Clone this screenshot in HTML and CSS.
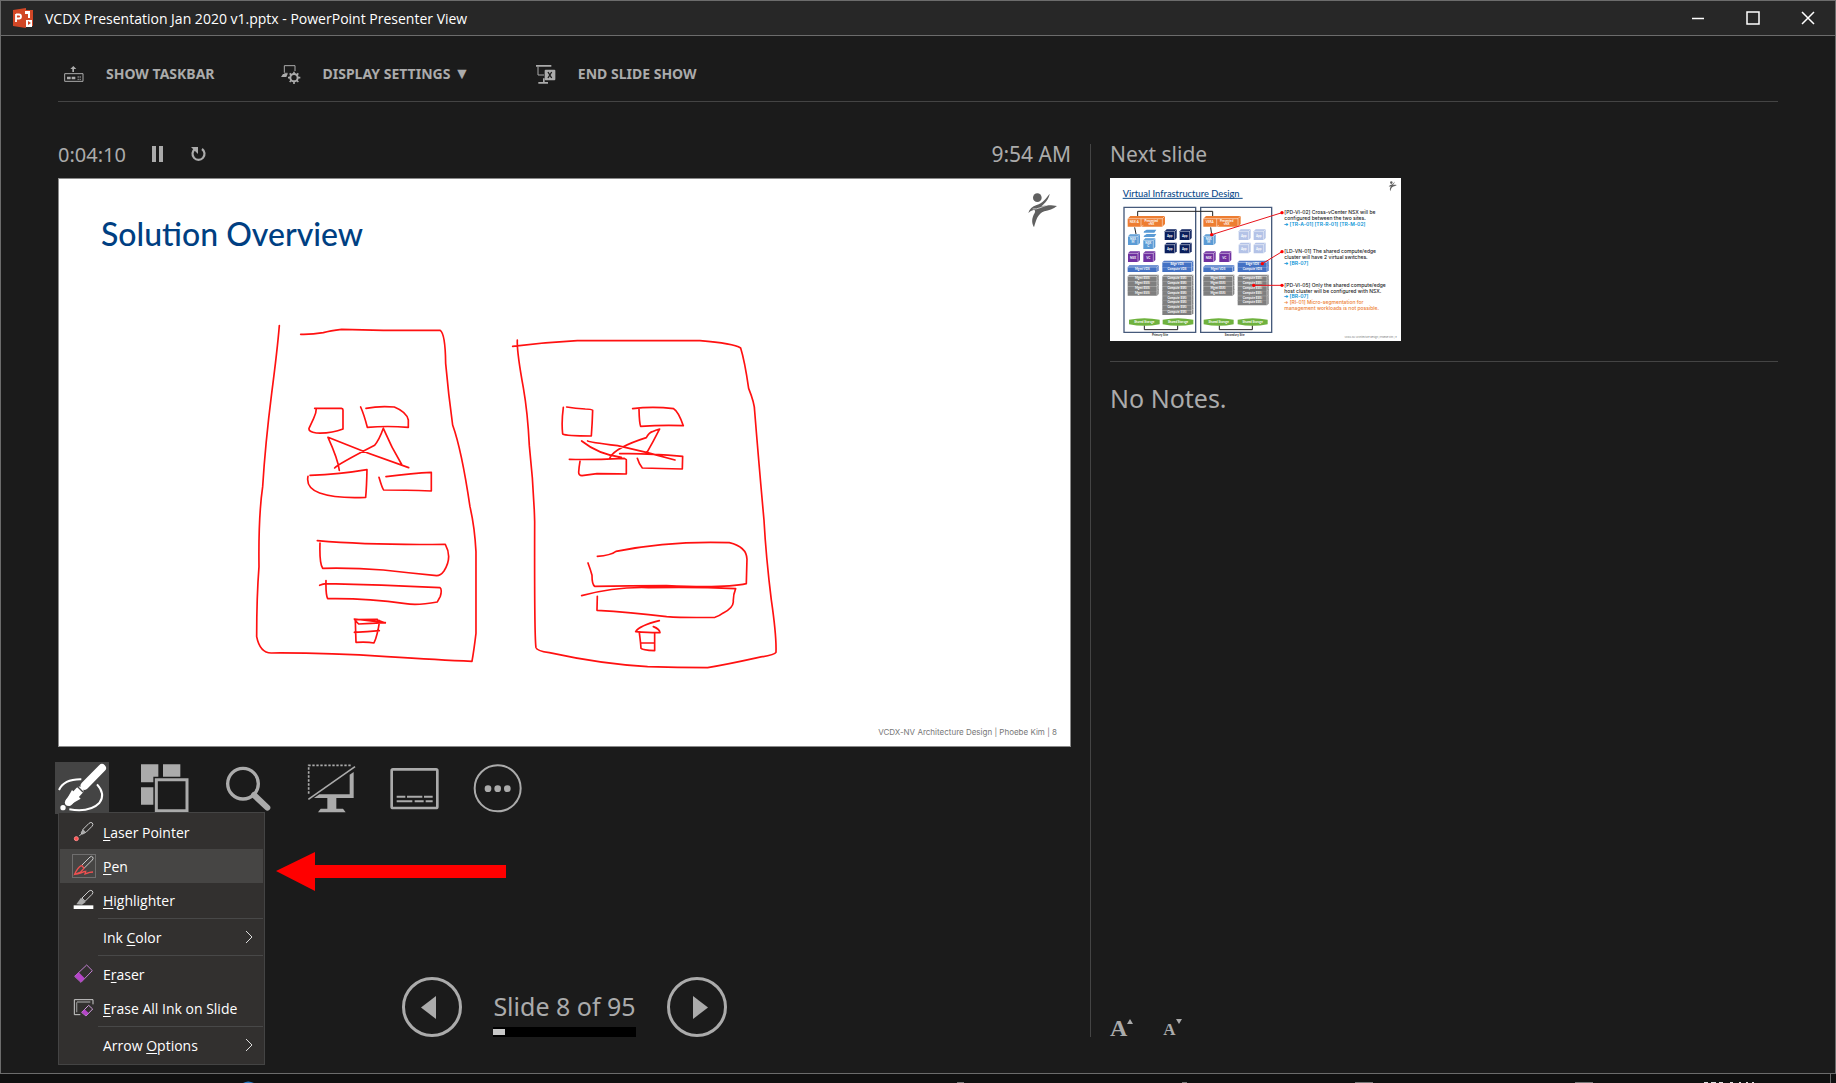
FILE: index.html
```html
<!DOCTYPE html>
<html lang="en">
<head>
<meta charset="utf-8">
<title>VCDX Presentation Jan 2020 v1.pptx - PowerPoint Presenter View</title>
<link rel="stylesheet" href="styles.css">
</head>
<body>
<div class="window">
  <header class="titlebar">
    <svg class="app-icon" viewBox="0 0 20 20" aria-hidden="true"><path d="M0 2 13 0v20L0 18z" fill="#d24726"/><path d="M13 2h7v16h-7z" fill="#d24726"/><path d="M3 6v8M3 6.500h3a1.700 1.700 0 0 1 0 4H3" fill="none" stroke="#fff" stroke-width="1.800"/><path d="M12 3h5v7h-2V6h-3zM13 12h6v7h-6z" fill="#fff"/><path d="M15 13v4l3-2z" fill="#d24726"/></svg>
    <h1 class="window-title">VCDX Presentation Jan 2020 v1.pptx - PowerPoint Presenter View</h1>
    <div class="window-controls">
      <button type="button" aria-label="Minimize"><svg viewBox="0 0 14 14"><path d="M1 7.500h12"/></svg></button>
      <button type="button" aria-label="Maximize"><svg viewBox="0 0 14 14"><path d="M1 1h12v12H1z"/></svg></button>
      <button type="button" aria-label="Close"><svg viewBox="0 0 14 14"><path d="M1 1l12 12M13 1 1 13"/></svg></button>
    </div>
  </header>

  <nav class="toolbar" aria-label="Presentation">
    <button type="button"><svg viewBox="35 39 72 72"><path d="M43 74h55v23H43z" fill="none" stroke="#ababab" stroke-width="3"/><path d="M50 83h11v8H50zM64 83h11v8H64zM82 82h3v4h-3zM88 82h3v4h-3zM82 89h3v4h-3zM88 89h3v4h-3zM69 51l9 9h-7v9h-5v-9h-6z"/></svg>SHOW TASKBAR</button>
    <button type="button"><svg viewBox="693 39 72 72"><path d="M709 71V50h32v16M709 73h10" fill="none" stroke="#ababab" stroke-width="3"/><path d="M705 75h14l-4 9h-16z"/><circle cx="738" cy="86" r="11" fill="none" stroke="#ababab" stroke-width="6"/><path d="M738 68v8M738 96v9M720 86h8M748 86h9M725 73l6 6M745 93l6 6M725 99l6-6M745 79l6-6" stroke="#ababab" stroke-width="5"/></svg><span>DISPLAY SETTINGS <span class="drop">▼</span></span></button>
    <button type="button"><svg viewBox="1448 39 72 72"><path d="M1454 48h46v5h-46zM1475 88h5v11h10v5h-29v-5h14z"/><path d="M1460 53v25h18" fill="none" stroke="#ababab" stroke-width="3"/><rect x="1480" y="62" width="32" height="32" rx="3"/><path d="M1490 69l11 18M1501 69l-11 18" stroke="#1b1b1b" stroke-width="4"/></svg>END SLIDE SHOW</button>
  </nav>

  <main class="presenter">
    <section class="current">
      <div class="clock-row">
        <span class="elapsed">0:04:10</span>
        <button type="button" aria-label="Pause the timer"><svg viewBox="0 0 16 16"><path d="M2 0h4v16H2zM9 0h4v16H9z"/></svg></button>
        <button type="button" aria-label="Restart the timer"><svg viewBox="0 0 16 16"><path d="M12 3a6 6 0 1 1-7 0" fill="none" stroke="#ababab" stroke-width="2.200"/><path d="M1 1h7v7z"/></svg></button>
        <time class="time">9:54 AM</time>
      </div>

      <svg class="slide" viewBox="0 0 1013 569" role="img" aria-label="Current slide">
        <text class="slide-title" x="43" y="68">Solution Overview</text>
        <text class="slide-footer" x="999" y="557">VCDX-NV Architecture Design | Phoebe Kim | 8</text>
        <g class="logo" transform="translate(902 -48) scale(.3333)"><circle cx="232" cy="203" r="13"/><path d="M269 191c-3 18-14 28-25 38 16-5 34-3 47-1-11 10-25 12-38 16-20 7-24 26-31 48-8-15-7-28 2-43 3-6 1-10-3-9-6 1-11 4-16 9 3-12 12-20 25-24 18-5 28-20 39-34z"/><path class="logo-gap" d="M218 237c16 2 28-8 45-12"/></g>
        <g class="ink" transform="translate(182 132) scale(.3333)">
          <path d="M118 47Q112 120 95 250Q76 400 68 530Q55 620 57 770Q50 860 50 980Q60 1030 95 1029Q260 1028 440 1040Q600 1050 696 1054Q702 1020 708 970V725Q704 650 690 590Q665 420 638 345Q625 250 617 160Q616 70 600 61H430L305 58Q270 62 250 68Q215 74 182 73"/>
          <path d="M224 295h80q5 1 5 5v57q-35 14-80 12-24-3-22-14l14-30q8-15 8-30M362 291q10 22 20 61 60-5 123 0v-22q-5-24-42-39-45-4-85 4M298 481q-4-33-34-99 120 50 242 91M284 474q8-10 120-68 14-17 26-51 24 57 56 110M210 496q90-3 171-17-1 50-4 83-90 4-138-13-42-15-35-50M417 502q10 34 14 38 65 0 143 3v-56q-55 2-136 13M232 692q160 14 384 11 22 40-4 80-10 14-22 14-80-8-160-17-90-7-182-5-10-15-8-76M239 826q10-4 21-5 160 3 340 12 7 5 1 26l-9 17q-60 11-95 5-120-17-234-15-6-12-5-54"/>
          <path d="M343 927q35 4 93 11-45 2-80 4l-10-10 2 65q35-2 54 2 10-20 17-67M343 967q40-1 75-5M344 966h30M344 929l68-1M412 930l24 9"/>
        </g>
        <g class="ink" transform="translate(442 142) scale(.3333)">
          <path d="M38 79q100-12 194-17h368q100 8 122 22 12 38 24 121 18 45 18 68 12 150 28 327 6 110 22 240 16 110 14 157-4 7-55 16-90 20-150 30-90 0-180-3-140-8-295-42-38-5-40-15-5-30-4-378-3-110-16-228-5-100-18-174-20-110-18-143"/>
          <path d="M190 262q-6 45-2 80 10 6 86 6 3-40 4-77-4-4-22-4-30-1-56-6M398 266q60-8 123 0 14 8 29 51-66-2-128 2-4-9-5-52M245 363q50 40 119 49M263 363q2 3 90 14 90 20 172 43M330 413q15-30 109-60 8-15 18-18 10-5 22-8-20 40-40 74M359 401q80-2 189 8l-1 38q-65-2-120-3-10-12-15-29M208 418q60 2 165-3l6 4v43q-50-1-88-1l-45 6q-10 0-10-10 1-16 4-33M292 709q40-3 56-15 160-32 340-26 52 12 53 50l-2 73q-60 14-240 6-110 0-215 2-8-5-8-33-4-16-12-37M245 827q100-27 200-24 140-3 262 3-8 20-7 40-1 18-30 33-10 8-25 13-90 2-145-2-110-14-209-19l1-42"/>
          <path d="M478 902q-60 15-71 33 50 4 73 3-1-11-20-18M418 938q4 30 5 47 4 6 41 7v-52M425 969h37"/>
        </g>
      </svg>

      <div class="tools">
        <div class="tool-anchor">
          <button class="tool active" type="button" aria-label="Pen and laser pointer tools" aria-expanded="true"><svg viewBox="46 66 162 156"><path d="M187 84l-52 53M119 152l-30 33" stroke="#fff" stroke-width="24" stroke-linecap="round" fill="none"/><path d="M112 138l18 18" stroke="#444" stroke-width="4"/><path d="M97 150 76 187q-1 11 10 10l37-21z" fill="#fff"/><circle cx="70" cy="203" r="8" fill="#fff"/><path d="M58 150q15-33 67-32M172 133q27 29 7 56-28 29-90 19" stroke="#fff" stroke-width="6" fill="none"/></svg></button>
          <div class="menu" role="menu">
            <button type="button" role="menuitem"><svg viewBox="95 234 72 72"><path d="M128 262l18-18q6-5 10-1 4 5-1 10l-18 18-14 5z" class="line"/><path d="M128 262l9 9-10 7-6-6zM118 281l8-9"/><path d="M117 282l9-9" class="line"/><circle cx="108" cy="290" r="6" fill="#ff5050" stroke="#ff8a8a" stroke-width="3"/></svg><span><u>L</u>aser Pointer</span></button>
            <button class="selected" type="button" role="menuitem"><svg viewBox="95 337 72 72"><path d="M96 338h70v70H96z" fill="none" stroke="#777" stroke-width="3"/><path d="M124 371l25-25q5-4 8 0 3 5-1 9l-25 25" class="line"/><path d="M124 371l7 9-10 11-18 7q8-20 21-27M103 398q20-3 28-8l5-1-2 8 14-5 10-1" fill="none" stroke="#f05050" stroke-width="4"/></svg><span><u>P</u>en</span></button>
            <button type="button" role="menuitem"><svg viewBox="95 441 72 72"><path d="M125 471l21-21q6-4 10 0 4 5-1 10l-21 21z" class="line"/><path d="M122 470l14 13-11 8-17-1z"/><path d="M100 493h59v11h-59z" fill="#fff"/></svg><span><u>H</u>ighlighter</span></button>
            <hr>
            <button type="button" role="menuitem"><span class="no-icon"></span><span>Ink <u>C</u>olor</span><svg class="chevron" viewBox="0 0 8 12"><path d="M1 0l6 6-6 6"/></svg></button>
            <hr>
            <button type="button" role="menuitem"><svg viewBox="95 664 72 72"><path d="M139 673l17 17-34 35-19-18z" fill="none" stroke="#c080d0" stroke-width="3"/><path d="M115 695l18 18-11 12-19-18z" fill="#b545c8"/></svg><span>E<u>r</u>aser</span></button>
            <button type="button" role="menuitem"><svg viewBox="95 768 72 72"><path d="M120 824h-18v-45h56v14" class="line"/><path d="M110 786h40M109 787v30" stroke="#888" stroke-width="4"/><path d="M145 796l12 11-20 21-13-11z" fill="none" stroke="#d0a0dc" stroke-width="3"/><path d="M133 808l12 11-8 9-13-11z" fill="#b545c8"/></svg><span><u>E</u>rase All Ink on Slide</span></button>
            <hr>
            <button type="button" role="menuitem"><span class="no-icon"></span><span>Arrow <u>O</u>ptions</span><svg class="chevron" viewBox="0 0 8 12"><path d="M1 0l6 6-6 6"/></svg></button>
          </div>
          <svg class="callout" viewBox="0 0 230 39" aria-hidden="true"><path d="M0 19 39 0v13h191v13H39v13z" fill="#f00"/></svg>
        </div>
        <button class="tool" type="button" aria-label="See all slides"><svg viewBox="295 66 162 156"><path d="M304 73h52v37h-15v17h-37zM370 73h52v37h-52zM304 142h37v52h-37z"/><path d="M350 119h92v93h-92z" fill="none" stroke="#ababab" stroke-width="9"/></svg></button>
        <button class="tool" type="button" aria-label="Zoom into the slide"><svg viewBox="544 66 162 156"><circle cx="610" cy="131" r="46" fill="none" stroke="#ababab" stroke-width="10"/><path d="M643 165l40 38" stroke="#ababab" stroke-width="18" stroke-linecap="round"/></svg></button>
        <button class="tool" type="button" aria-label="Black or unblack slide show"><svg viewBox="793 66 162 156"><path d="M807 161V76h126" fill="none" stroke="#ababab" stroke-width="5" stroke-dasharray="7 5"/><path d="M806 178 946 80" stroke="#ababab" stroke-width="5"/><path d="M942 96v78H823l16-11h91v-59zM863 174h27v32h20l8 11h-83l8-11h20z"/></svg></button>
        <button class="tool" type="button" aria-label="Toggle subtitles"><svg viewBox="1042 66 162 156"><rect x="1056" y="88" width="137" height="116" rx="4" fill="none" stroke="#ababab" stroke-width="8"/><path d="M1071 170h26M1102 170h46M1153 170h26M1071 184h47M1125 184h27M1158 184h21" stroke="#ababab" stroke-width="6"/></svg></button>
        <button class="tool" type="button" aria-label="More slide show options"><svg viewBox="1291 66 162 156"><circle cx="1374" cy="145" r="69" fill="none" stroke="#ababab" stroke-width="6"/><circle cx="1345" cy="146" r="10"/><circle cx="1374" cy="146" r="10"/><circle cx="1403" cy="146" r="10"/></svg></button>
      </div>

      <div class="pager">
        <button type="button" aria-label="Previous slide"><svg viewBox="0 0 60 60"><circle cx="30" cy="30" r="28.500"/><path d="M19 30.500 34 19v23z"/></svg></button>
        <div class="position">
          <label for="progress">Slide 8 of 95</label>
          <progress id="progress" value="8" max="95"></progress>
        </div>
        <button type="button" aria-label="Next slide"><svg viewBox="0 0 60 60"><circle cx="30" cy="30" r="28.500"/><path d="M41 30.500 26 19v23z"/></svg></button>
      </div>
    </section>

    <aside class="side">
      <h2>Next slide</h2>
      <svg class="thumb" viewBox="30 27 873 489" role="img" aria-label="Next slide: Virtual Infrastructure Design">
        <defs>
          <g id="cube"><path d="M0 6 6 0h30v26l-6 6H0z"/><path d="M0 6h30v26M30 6l6-6" class="edge"/></g>
          <g id="slab"><path d="M0 5 5 0h88v15l-5 5H0z"/><path d="M0 5h88v15M88 5l5-5" class="edge"/></g>
          <g id="orange"><path d="M0 8 8 0h104v24l-8 8H0z"/><path d="M0 8h104v24M104 8l8-8M40 8v24l7-4" class="edge"/></g>
        </defs>
        <text class="next-title" x="68" y="83">Virtual Infrastructure Design</text>
        <path d="M68 88h360" stroke="#0b4a8a" stroke-width="3"/>
        <g class="logo" transform="translate(809 -18) scale(.28 .29)"><circle cx="232" cy="203" r="13"/><path d="M269 191c-3 18-14 28-25 38 16-5 34-3 47-1-11 10-25 12-38 16-20 7-24 26-31 48-8-15-7-28 2-43 3-6 1-10-3-9-6 1-11 4-16 9 3-12 12-20 25-24 18-5 28-20 39-34z"/></g>
        <path d="M72 115h215v375H72zM302 115h213v375H302z" fill="none" stroke="#465a7b" stroke-width="4"/>
        <path d="M113 142v-15h225v14M104 175l4 20M332 175l3 22M133 469v13h100v-13M358 469v13h99v-13" fill="none" stroke="#222" stroke-width="3"/>
        <g fill="#ed7d31"><use href="#orange" x="83" y="141"/><use href="#orange" x="310" y="141"/></g>
        <g fill="#5b9bd5"><use href="#cube" x="84" y="196"/><use href="#cube" x="130" y="208"/><use href="#cube" x="311" y="196"/><path d="M132 187l8-5h29l-6 9h-32zM132 200l8-5h29l-6 9h-32z"/></g>
        <g fill="#7030a0"><use href="#cube" x="84" y="247"/><use href="#cube" x="130" y="247"/><use href="#cube" x="311" y="247"/><use href="#cube" x="358" y="247"/></g>
        <g fill="#0b1f5c"><use href="#cube" x="194" y="181"/><use href="#cube" x="239" y="181"/><use href="#cube" x="194" y="221"/><use href="#cube" x="239" y="221"/></g>
        <g fill="#b4c3e7"><use href="#cube" x="416" y="181"/><use href="#cube" x="461" y="181"/><use href="#cube" x="416" y="221"/><use href="#cube" x="461" y="221"/></g>
        <g fill="#4472c4"><use href="#slab" x="83" y="289"/><use href="#slab" x="187" y="289"/><use href="#slab" x="187" y="275"/><use href="#slab" x="310" y="289"/><use href="#slab" x="413" y="289"/><use href="#slab" x="413" y="275"/></g>
        <g fill="#7f7f7f">
          <use href="#slab" x="83" y="360"/><use href="#slab" x="83" y="346"/><use href="#slab" x="83" y="331"/><use href="#slab" x="83" y="317"/>
          <use href="#slab" x="310" y="360"/><use href="#slab" x="310" y="346"/><use href="#slab" x="310" y="331"/><use href="#slab" x="310" y="317"/>
          <use href="#slab" x="187" y="418"/><use href="#slab" x="187" y="403"/><use href="#slab" x="187" y="389"/><use href="#slab" x="187" y="375"/><use href="#slab" x="187" y="360"/><use href="#slab" x="187" y="346"/><use href="#slab" x="187" y="331"/><use href="#slab" x="187" y="317"/>
          <use href="#slab" x="413" y="389"/><use href="#slab" x="413" y="375"/><use href="#slab" x="413" y="360"/><use href="#slab" x="413" y="346"/><use href="#slab" x="413" y="331"/><use href="#slab" x="413" y="317"/>
        </g>
        <path d="M87 452q46-9 92 0v14q-46 9-92 0zM188 452q46-9 92 0v14q-46 9-92 0zM311 452q45-9 90 0v14q-45 9-90 0zM413 452q45-9 90 0v14q-45 9-90 0z" fill="#6fb23e"/>
        <g class="tag">
          <text x="103" y="163">NSX-A</text><text x="154" y="158">Presented</text><text x="154" y="168">vNX</text><text x="329" y="163">VSRA</text><text x="380" y="158">Presented</text><text x="380" y="168">vNX</text>
          <text x="99" y="213">NSX</text><text x="99" y="221">M</text><text x="145" y="224">NSX</text><text x="145" y="233">C</text><text x="326" y="213">NSX</text><text x="326" y="221">M</text>
          <text x="99" y="270">NSX</text><text x="145" y="270">VC</text><text x="326" y="270">NSX</text><text x="373" y="270">VC</text>
          <text x="209" y="204">App</text><text x="254" y="204">App</text><text x="209" y="244">App</text><text x="254" y="244">App</text><text x="431" y="204">App</text><text x="476" y="204">App</text><text x="431" y="244">App</text><text x="476" y="244">App</text>
          <text x="127" y="302">Mgmt VDS</text><text x="231" y="288">Edge VDS</text><text x="231" y="302">Compute VDS</text><text x="354" y="302">Mgmt VDS</text><text x="457" y="288">Edge VDS</text><text x="457" y="302">Compute VDS</text>
          <text x="127" y="331">Mgmt ESXi</text><text x="127" y="345">Mgmt ESXi</text><text x="127" y="360">Mgmt ESXi</text><text x="127" y="374">Mgmt ESXi</text>
          <text x="354" y="331">Mgmt ESXi</text><text x="354" y="345">Mgmt ESXi</text><text x="354" y="360">Mgmt ESXi</text><text x="354" y="374">Mgmt ESXi</text>
          <text x="231" y="331">Compute ESXi</text><text x="231" y="345">Compute ESXi</text><text x="231" y="360">Compute ESXi</text><text x="231" y="374">Compute ESXi</text><text x="231" y="389">Compute ESXi</text><text x="231" y="403">Compute ESXi</text><text x="231" y="417">Compute ESXi</text><text x="231" y="432">Compute ESXi</text>
          <text x="457" y="331">Compute ESXi</text><text x="457" y="345">Compute ESXi</text><text x="457" y="360">Compute ESXi</text><text x="457" y="374">Compute ESXi</text><text x="457" y="389">Compute ESXi</text><text x="457" y="403">Compute ESXi</text>
          <text x="133" y="462">Shared Storage</text><text x="234" y="462">Shared Storage</text><text x="356" y="462">Shared Storage</text><text x="458" y="462">Shared Storage</text>
          <text class="dark" x="180" y="500">Primary Site</text><text class="dark" x="404" y="500">Secondary Site</text>
        </g>
        <path d="M335 197 546 131M487 284l59-36M461 349h85" stroke="#e8141c" stroke-width="3"/>
        <g fill="#f00"><circle cx="335" cy="197" r="5"/><circle cx="546" cy="131" r="5"/><circle cx="487" cy="284" r="5"/><circle cx="546" cy="248" r="5"/><circle cx="461" cy="349" r="5"/><circle cx="546" cy="349" r="5"/></g>
        <g class="callouts">
          <text x="553" y="136">[PD-VI-02] Cross-vCenter NSX will be</text><text x="553" y="153">configured between the two sites.</text><text class="blue" x="553" y="170">➔ [TR-A-01] [TR-R-01] [TR-M-02]</text>
          <text x="553" y="253">[LD-VN-01] The shared compute/edge</text><text x="553" y="270">cluster will have 2 virtual switches.</text><text class="blue" x="553" y="287">➔ [BR-07]</text>
          <text x="553" y="354">[PD-VI-05] Only the shared compute/edge</text><text x="553" y="371">host cluster will be configured with NSX.</text><text class="blue" x="553" y="388">➔ [BR-07]</text><text class="rust" x="553" y="405">➔ [RI-01] Micro-segmentation for</text><text class="rust" x="553" y="422">management workloads is not possible.</text>
        </g>
        <text class="next-footer" x="890" y="506">VCDX-NV Architecture Design | Phoebe Kim | 9</text>
      </svg>
      <div class="notes"><p>No Notes.</p></div>
      <div class="text-size">
        <button type="button" aria-label="Make the text larger"><span class="letter large">A</span><svg viewBox="0 0 6 5"><path d="M0 5 3 0l3 5z"/></svg></button>
        <button type="button" aria-label="Make the text smaller"><span class="letter">A</span><svg viewBox="0 0 6 5"><path d="M0 0h6L3 5z"/></svg></button>
      </div>
    </aside>
  </main>
</div>
<footer class="taskbar">
  <svg viewBox="0 0 1836 9" aria-hidden="true"><path d="M243 9q5-3 11 0z" fill="#2b7dc4"/><path d="M957 8h7v1h-7zM1182 8h5v1h-5zM1355 8h18v1h-18zM1575 8h18v1h-18z" fill="#777"/><path d="M1704 8h4v1h-4zM1711 8h5v1h-5zM1719 8h4v1h-4zM1730 8h3v1h-3zM1739 8h2v1h-2zM1746 8h2v1h-2zM1752 8h2v1h-2z" fill="#ddd"/><path d="M1830 0h1v9h-1z" fill="#666"/></svg>
</footer>
</body>
</html>
```
FILE: styles.css
```css
* { box-sizing: border-box; }

body {
  margin: 0;
  min-height: 100vh;
  display: flex;
  flex-direction: column;
  background: #101010;
  color: #ababab;
  font-family: "Noto Sans", "Open Sans", sans-serif;
}

h1, h2, p { margin: 0; font-weight: 400; }

button {
  margin: 0;
  padding: 0;
  border: 0;
  background: none;
  color: inherit;
  font: inherit;
}

svg { display: block; fill: #ababab; }

.window {
  flex: 1;
  display: flex;
  flex-direction: column;
  border: 1px solid #6c6c6c;
  background: #1b1b1b;
}

/* Title bar */
.titlebar {
  display: flex;
  align-items: center;
  height: 35px;
  padding-left: 12px;
  border-bottom: 1px solid #6c6c6c;
  background: #272727;
}
.app-icon { width: 20px; height: 20px; }
.window-title {
  margin-left: 12px;
  color: #fff;
  font-family: "Open Sans", sans-serif;
  font-size: 14px;
}
.window-controls { display: flex; align-self: stretch; margin-left: auto; }
.window-controls button { display: grid; place-items: center; width: 55px; }
.window-controls svg {
  width: 14px;
  height: 14px;
  fill: none;
  stroke: #fff;
  stroke-width: 1.5;
}

/* Top commands */
.toolbar {
  display: flex;
  gap: 64px;
  margin: 0 57px;
  padding: 26px 4px 15px;
  border-bottom: 1px solid #444;
}
.toolbar button {
  display: flex;
  align-items: center;
  gap: 20px;
  height: 24px;
  font-size: 14px;
  font-weight: 700;
  line-height: 24px;
}
.toolbar svg { width: 24px; height: 24px; }
.drop { font-size: 16px; line-height: 16px; }

/* Two columns */
.presenter {
  flex: 1;
  display: grid;
  grid-template-columns: 1033fr 687fr;
  padding: 42px 57px 36px;
}
.current {
  display: flex;
  flex-direction: column;
  min-width: 0;
  padding-right: 19px;
  border-right: 1px solid #444;
}
.side {
  display: flex;
  flex-direction: column;
  min-width: 0;
  padding-left: 19px;
}

.clock-row {
  display: flex;
  align-items: center;
  height: 20px;
  margin-bottom: 14px;
  font-size: 20px;
}
.clock-row button { margin-left: 24px; }
.clock-row svg { width: 16px; height: 16px; }
.clock-row .time { margin-left: auto; font-size: 21px; }

.slide {
  width: 100%;
  aspect-ratio: 1013 / 569;
  background: #fff;
  outline: 1px solid #8a8a8a;
  outline-offset: -1px;
}
.slide-title { fill: #003f82; font: 500 32px Lato, sans-serif; }
.slide-footer { fill: #777; font: 8px Inter, sans-serif; text-anchor: end; }
.logo { fill: #606060; }
.logo-gap { fill: none; stroke: #fff; stroke-width: 2; }
.ink {
  fill: none;
  stroke: #f11;
  stroke-width: 5;
  stroke-linecap: round;
  stroke-linejoin: round;
}

/* Slide tools */
.tools {
  display: flex;
  gap: 29px;
  margin: 15px 0 0 -3px;
}
.tool-anchor { position: relative; }
.tool { display: block; width: 54px; height: 52px; }
.tool svg { width: 54px; height: 52px; }
.tool.active { background: #444; }

.menu {
  position: absolute;
  z-index: 1;
  top: 50px;
  left: 3px;
  width: 207px;
  padding: 2px 1px;
  border: 1px solid #444;
  background: #32302f;
  color: #fff;
  font-family: "Open Sans", sans-serif;
  font-size: 14px;
}
.menu button {
  display: flex;
  align-items: center;
  gap: 7px;
  width: 100%;
  height: 34px;
  padding: 0 10px 0 12px;
  text-align: left;
}
.menu .selected { background: #464544; }
.menu svg, .no-icon { width: 24px; height: 24px; }
.menu u { text-underline-offset: 2px; }
.menu hr {
  height: 1px;
  margin: 1px 0 1px 38px;
  border: 0;
  background: #484848;
}
.menu .chevron {
  width: 8px;
  height: 12px;
  margin-left: auto;
  fill: none;
  stroke: #ddd;
  overflow: visible;
}
.line { fill: none; stroke: #ccc; stroke-width: 3; }

.callout {
  position: absolute;
  top: 90px;
  left: 221px;
  width: 230px;
  height: 39px;
}

/* Slide navigation */
.pager {
  display: flex;
  justify-content: center;
  gap: 31px;
  margin-top: auto;
}
.pager svg { width: 60px; height: 60px; }
.pager circle { fill: none; stroke: #ababab; stroke-width: 3; }
.position { padding-top: 12px; }
.position label { display: block; font-size: 25px; line-height: 34px; }
progress {
  display: block;
  width: 100%;
  height: 10px;
  margin-top: 4px;
  padding: 2px 0;
  border: 0;
  appearance: none;
  background: #000;
}
progress::-webkit-progress-bar { background: #000; }
progress::-webkit-progress-value { background: #c8c8c8; }

/* Next slide and notes */
.side h2 { margin-bottom: 14px; font-size: 21px; line-height: 20px; }
.thumb {
  width: 291px;
  height: 163px;
  background: #fff;
}
.next-title { fill: #0b4a8a; font: 500 28px Lato, sans-serif; }
.next-footer { fill: #777; font: 7px Inter, sans-serif; text-anchor: end; }
.edge { fill: none; stroke: #fff; stroke-width: 1.5; }
.tag { fill: #fff; font: 700 9px Lato, sans-serif; text-anchor: middle; }
.dark { fill: #333; }
.callouts { fill: #222; font: 500 15px Inter, sans-serif; }
.blue { fill: #0a94d6; font-weight: 600; }
.rust { fill: #ed7d31; font-weight: 500; }

.notes {
  flex: 1;
  margin-top: 20px;
  padding-top: 19px;
  border-top: 1px solid #444;
  font-size: 25px;
  line-height: 34px;
}
.text-size { display: flex; gap: 30px; }
.text-size button { display: flex; align-items: flex-end; }
.text-size svg { width: 6px; height: 5px; align-self: flex-start; }
.letter { font: 700 17px/14px "Liberation Serif", serif; }
.letter.large { font-size: 24px; line-height: 18px; }

.taskbar { height: 9px; overflow: hidden; }
.taskbar svg { width: 100%; height: 9px; }
```
